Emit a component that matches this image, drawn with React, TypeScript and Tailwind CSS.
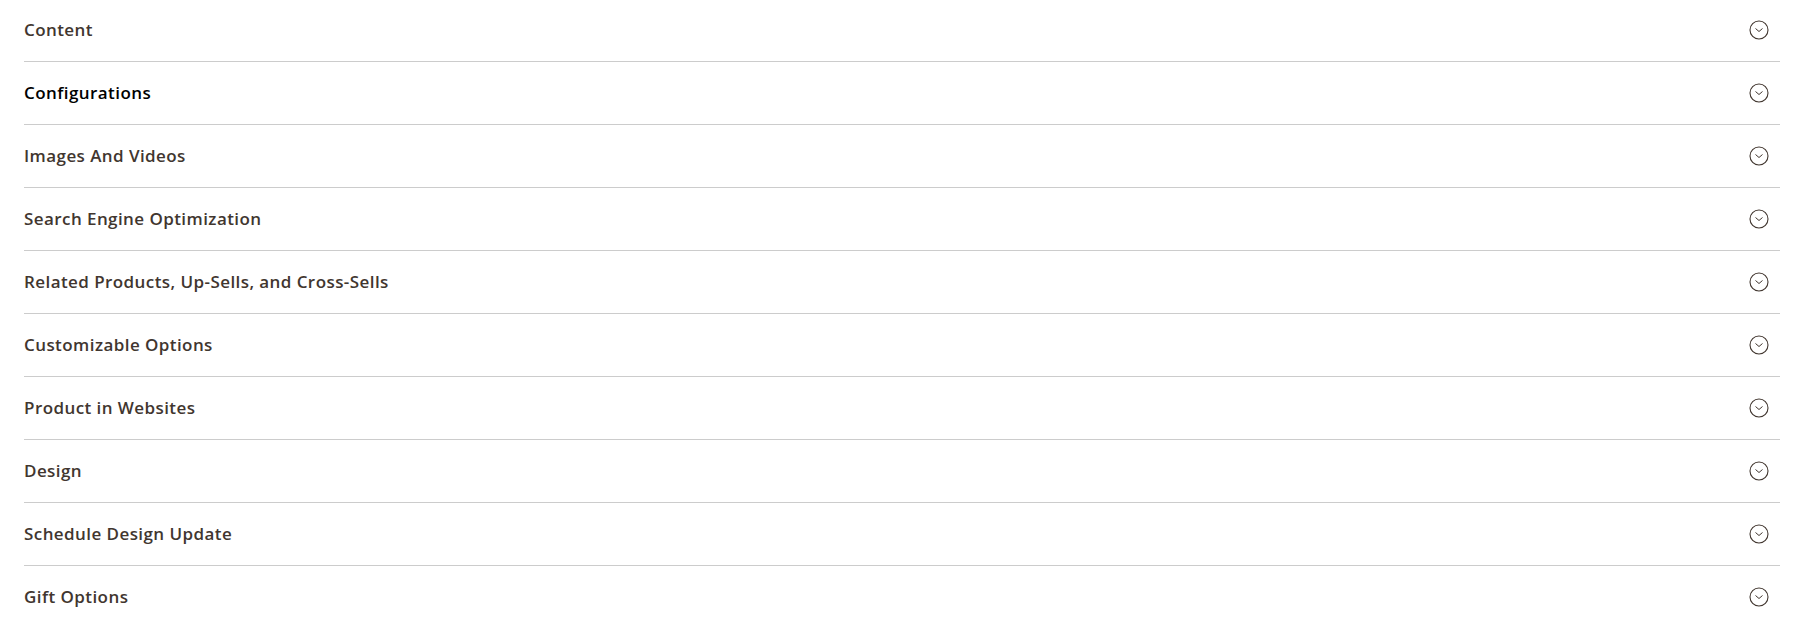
const sections = [
  "Content",
  "Configurations",
  "Images And Videos",
  "Search Engine Optimization",
  "Related Products, Up-Sells, and Cross-Sells",
  "Customizable Options",
  "Product in Websites",
  "Design",
  "Schedule Design Update",
  "Gift Options",
];

function ChevronCircle() {
  return (
    <svg width="20" height="20" viewBox="0 0 20 20" fill="none" stroke="#41362f">
      <circle cx="10" cy="10" r="9" strokeWidth="1.1" />
      <path d="M6.5 8.5 L10 11.5 L13.5 8.5" strokeWidth="1" />
    </svg>
  );
}

export default function App() {
  return (
    <div className="min-h-screen bg-white pl-6 pr-[15px] font-['Open_Sans',sans-serif]">
      <div className="-mt-px">
        {sections.map((title, i) => (
          <div
            key={title}
            className="flex h-[63px] cursor-pointer items-center justify-between border-b border-[#cccccc]"
          >
            <span
              className={
                i === 1
                  ? "text-[17px] font-semibold tracking-[0.025em] text-black"
                  : "text-[17px] font-semibold tracking-[0.025em] text-[#41362f]"
              }
            >
              {title}
            </span>
            <span className="mr-[11px] flex items-center">
              <ChevronCircle />
            </span>
          </div>
        ))}
      </div>
    </div>
  );
}
